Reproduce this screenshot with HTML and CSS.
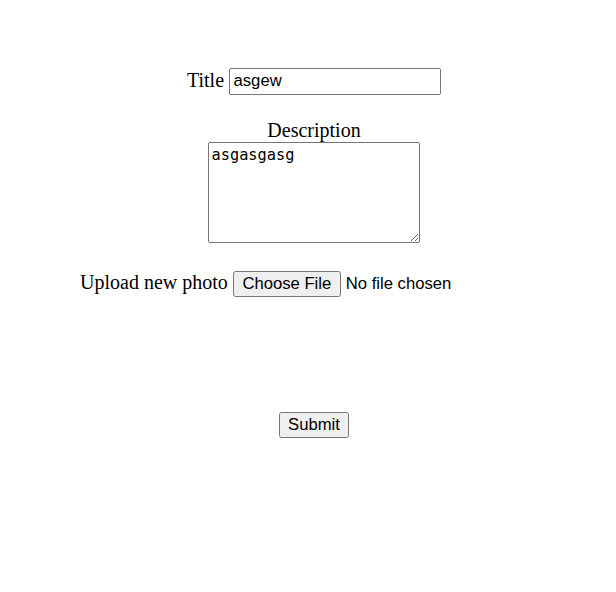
FILE: index.html
```html
<!DOCTYPE html>
<html>
<head>
<meta charset="utf-8">
<link rel="stylesheet" href="styles.css">
</head>
<body>
<div class="page">
  <form class="form">
    <div class="row row-title">
      <label for="title">Title</label>
      <input id="title" type="text" value="asgew">
    </div>
    <div class="row row-desc">
      <label for="desc" class="block-label">Description</label>
      <textarea id="desc" rows="5">asgasgasg</textarea>
    </div>
    <div class="row row-upload">
      <label for="photo">Upload new photo</label>
      <input id="photo" type="file">
    </div>
    <div class="row row-submit">
      <button type="submit" class="submit">Submit</button>
    </div>
  </form>
</div>
</body>
</html>
```

FILE: styles.css
```css
html, body {
  margin: 0;
  padding: 0;
  background: #fff;
}
.page {
  zoom: 1.25;
  font-family: "Liberation Serif", "Times New Roman", serif;
  font-size: 16px;
  color: #000;
  padding: 8px;
  padding-left: 17.6px;
}
.form {
  text-align: center;
}
.row-title {
  margin-top: 46px;
}
.row-desc {
  margin-top: 19.2px;
}
.block-label {
  display: block;
}
.row-upload {
  margin-top: 22.4px;
}
.row-submit {
  margin-top: 91.6px;
}
input[type="text"], input[type="file"], button {
  font-family: "Liberation Sans", Arial, sans-serif;
  font-size: 13.333px;
}
input[type="text"] {
  box-sizing: border-box;
  width: 169.6px;
  height: 21.6px;
}
textarea {
  box-sizing: border-box;
  width: 169.6px;
  height: 80.8px;
  font-family: "DejaVu Sans Mono", "Liberation Mono", monospace;
  font-size: 12.25px;
  vertical-align: bottom;
  padding: 3px 2px;
}
```
